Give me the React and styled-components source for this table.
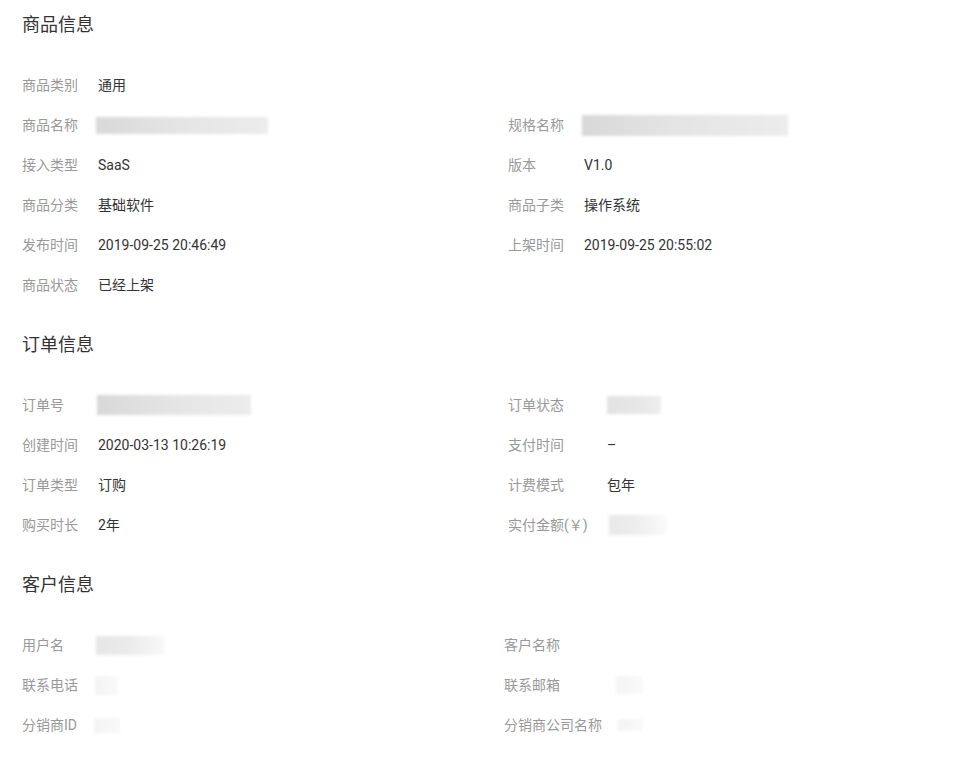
import styled, { createGlobalStyle } from 'styled-components';

const GlobalStyle = createGlobalStyle`
	body {
		margin: 0;
		background: #fff;
		font-family: Roboto, "Noto Sans CJK SC", sans-serif;
	}
`;

const Page = styled.div`
	padding: 0 22px;
	width: 954px;
	box-sizing: border-box;
`;

const Section = styled.section`
	padding-bottom: 15px;
`;

const Title = styled.h3`
	margin: 13px 0 28px;
	font-size: 18px;
	line-height: 24px;
	font-weight: 400;
	color: #333;
`;

const Grid = styled.div`
	display: grid;
	grid-template-columns: ${(p) => p.$split}px 1fr;
`;

const Row = styled.div`
	display: flex;
	align-items: center;
	height: 40px;
	grid-column: ${(p) => (p.$full ? '1 / span 2' : 'auto')};
`;

const Label = styled.span`
	flex: 0 0 ${(p) => p.$w}px;
	font-size: 14px;
	line-height: 20px;
	color: #999;
	white-space: nowrap;
`;

const Value = styled.span`
	font-size: 14px;
	line-height: 20px;
	color: #333;
	white-space: nowrap;
`;

const Blur = styled.span`
	display: inline-block;
	width: ${(p) => p.$w}px;
	height: ${(p) => p.$h}px;
	margin-left: ${(p) => p.$dx || 0}px;
	background: linear-gradient(90deg, ${(p) => p.$from} 0%, ${(p) => p.$mid} 45%, ${(p) => p.$to} 100%);
	filter: blur(1.5px);
`;

const grey = { $from: '#d8d8d8', $mid: '#e4e4e4', $to: '#ececec' };
const faint = { $from: '#f4f4f4', $mid: '#f6f6f6', $to: '#fafafa' };

const product = [
	{ label: '商品类别', value: '通用', full: true },
	{ label: '商品名称', blur: { $w: 172, $h: 17, $dx: -2, ...grey } },
	{ label: '规格名称', blur: { $w: 206, $h: 21, $dx: -2, ...grey } },
	{ label: '接入类型', value: 'SaaS' },
	{ label: '版本', value: 'V1.0' },
	{ label: '商品分类', value: '基础软件' },
	{ label: '商品子类', value: '操作系统' },
	{ label: '发布时间', value: '2019-09-25 20:46:49' },
	{ label: '上架时间', value: '2019-09-25 20:55:02' },
	{ label: '商品状态', value: '已经上架', full: true },
];

const order = [
	{ label: '订单号', blur: { $w: 154, $h: 20, $dx: -1, ...grey } },
	{ label: '订单状态', blur: { $w: 54, $h: 18, $dx: 0, $from: '#e2e2e2', $mid: '#e6e6e6', $to: '#ededed' } },
	{ label: '创建时间', value: '2020-03-13 10:26:19' },
	{ label: '支付时间', value: '–' },
	{ label: '订单类型', value: '订购' },
	{ label: '计费模式', value: '包年' },
	{ label: '购买时长', value: '2年' },
	{ label: '实付金额(￥)', blur: { $w: 58, $h: 20, $dx: 2, $from: '#e8e8e8', $mid: '#ededed', $to: '#fbfbfb' } },
];

const customer = [
	{ label: '用户名', blur: { $w: 68, $h: 19, $dx: 0, $from: '#e6e6e6', $mid: '#eaeaea', $to: '#f8f8f8' } },
	{ label: '客户名称' },
	{ label: '联系电话', blur: { $w: 23, $h: 19, $dx: -1, ...faint } },
	{ label: '联系邮箱', blur: { $w: 27, $h: 18, $dx: 0, ...faint } },
	{ label: '分销商ID', blur: { $w: 26, $h: 15, $dx: -2, ...faint } },
	{ label: '分销商公司名称', blur: { $w: 25, $h: 12, $dx: 2, ...faint } },
];

function InfoSection({ title, rows, split, leftLabel, rightLabel }) {
	return (
		<Section>
			<Title>{title}</Title>
			<Grid $split={split}>
				{rows.map((r, i) => {
					const right = !r.full && (rows.slice(0, i).filter((x) => !x.full).length % 2 === 1);
					return (
						<Row key={r.label} $full={r.full}>
							<Label $w={right ? rightLabel : leftLabel}>{r.label}</Label>
							{r.blur ? <Blur {...r.blur} /> : <Value>{r.value}</Value>}
						</Row>
					);
				})}
			</Grid>
		</Section>
	);
}

export default function App() {
	return (
		<Page>
			<GlobalStyle />
			<InfoSection title="商品信息" rows={product} split={486} leftLabel={76} rightLabel={76} />
			<InfoSection title="订单信息" rows={order} split={486} leftLabel={76} rightLabel={99} />
			<InfoSection title="客户信息" rows={customer} split={482} leftLabel={74} rightLabel={112} />
		</Page>
	);
}
